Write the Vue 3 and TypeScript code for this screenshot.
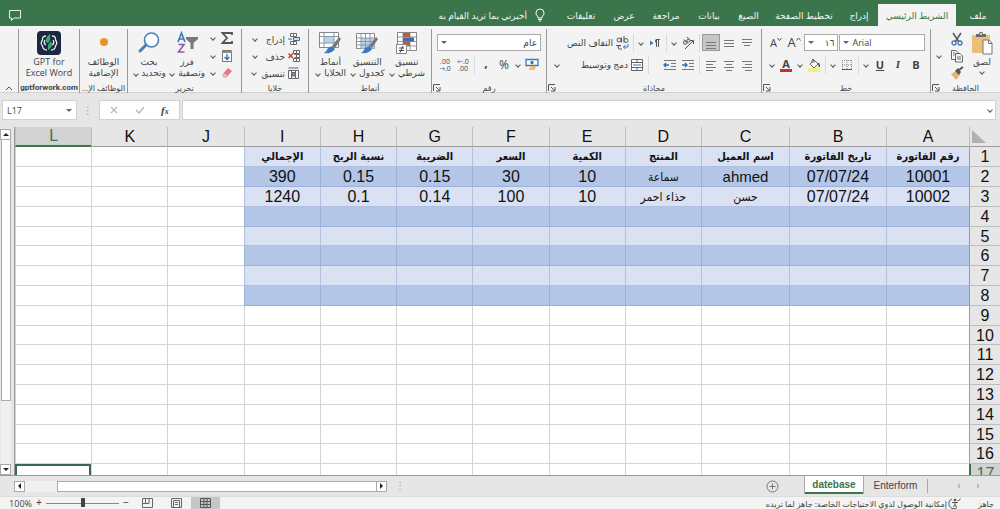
<script setup lang="ts">
import { ref } from 'vue'

const tabs = ['ملف', 'الشريط الرئيسي', 'إدراج', 'تخطيط الصفحة', 'الصيغ', 'بيانات', 'مراجعة', 'عرض', 'تعليقات']
const activeTab = ref('الشريط الرئيسي')

const columns = ['A', 'B', 'C', 'D', 'E', 'F', 'G', 'H', 'I', 'J', 'K', 'L']
const rowCount = 17
const tableColumns = 9
const tableRows = 8

const data: string[][] = [
  ['رقم الفاتورة', 'تاريخ الفاتورة', 'اسم العميل', 'المنتج', 'الكمية', 'السعر', 'الضريبة', 'نسبة الربح', 'الإجمالي'],
  ['10001', '07/07/24', 'ahmed', 'سماعة', '10', '30', '0.15', '0.15', '390'],
  ['10002', '07/07/24', 'حسن', 'حذاء احمر', '10', '100', '0.14', '0.1', '1240'],
]

const cellText = (row: number, col: number): string => data[row - 1]?.[col] ?? ''
const cellClass = (row: number, col: number) => ({
  band: row <= tableRows && col < tableColumns,
  dark: row <= tableRows && col < tableColumns && row % 2 === 0,
  head: row === 1,
  arabic: /[\u0600-\u06ff]/.test(cellText(row, col)),
  latin: /[a-z]/.test(cellText(row, col)),
  picked: row === 17 && col === 11,
})

const verticalAligns = [
  { name: 'محاذاة للأعلى', d: 'M3 4.5H13M3 7.5H13M5 10.5H11', on: false },
  { name: 'محاذاة للوسط', d: 'M3 5.5H13M3 8.5H13M3 11.5H13', on: false },
  { name: 'محاذاة للأسفل', d: 'M3 7.5H13M3 10.5H13M3 13.5H13', on: true },
]
const horizontalAligns = [
  { name: 'محاذاة لليمين', d: 'M3 4.5H13M6 7.5H13M3 10.5H13M6 13.5H13' },
  { name: 'توسيط', d: 'M3 4.5H13M5 7.5H11M3 10.5H13M5 13.5H11' },
  { name: 'محاذاة لليسار', d: 'M3 4.5H13M3 7.5H10M3 10.5H13M3 13.5H10' },
]

const fontName = ref('Arial')
const fontSize = ref('١٦')
const numberFormat = ref('عام')
const nameBox = ref('L17')
const formula = ref('')
const zoom = ref(50)
</script>

<template>
  <div class="app" dir="rtl">
    <nav class="tabs">
      <button v-for="t in tabs" :key="t" class="tab" :class="{ active: t === activeTab }" @click="activeTab = t">{{ t }}</button>
      <button class="tell">
        <svg width="12" height="14" viewBox="0 0 12 14" fill="none" stroke="#fff"><path d="M4 10V8.600C2.500 7.500 2 6.500 2 5a4 4 0 0 1 8 0c0 1.500-.5 2.500-2 3.600V10zM4 11.500H8M5 13H7" /></svg>
        <span>أخبرني بما تريد القيام به</span>
      </button>
      <button class="comment" aria-label="تعليقات">
        <svg width="14" height="13" viewBox="0 0 14 13" fill="none" stroke="#e6f2ea"><path d="M1.500 1.500H12.500V9H6L3.500 11.500V9H1.500Z" /></svg>
      </button>
    </nav>

    <div class="ribbon">
      <section class="group">
        <div class="body clip">
          <button class="big">
            <svg width="24" height="24" viewBox="0 0 24 24"><path d="M2 4H20V22H2Z" fill="#e9bf7a" /><path d="M6 6V3H9C9 0 13 0 13 3H16V6Z" fill="#6a6a6a" /><circle cx="11" cy="3" r="1" fill="#f3f3f3" /><path d="M13 9H19L22 12V23H13Z" fill="#fff" stroke="#777" /><path d="M18.500 9V12.500H22" fill="none" stroke="#777" /></svg>
            <span>لصق</span><i class="chev"></i>
          </button>
          <div class="stack icons">
            <button class="ib" aria-label="قص"><svg width="14" height="14" viewBox="0 0 14 14" fill="none"><path d="M3 1L9 10M11 1L5 10" stroke="#555" stroke-width="1.500" /><circle cx="4" cy="11" r="2" stroke="#3c78b4" stroke-width="1.300" /><circle cx="10" cy="11" r="2" stroke="#3c78b4" stroke-width="1.300" /></svg></button>
            <button class="ib" aria-label="نسخ"><svg width="14" height="14" viewBox="0 0 14 14" fill="#f7f7f7" stroke="#666"><path d="M1.500 1.500H6L8.500 4V10.500H1.500Z" /><path d="M5.500 4.500H10L12.500 7V13H5.500Z" /><path d="M7 8H11M7 10H11M3 4H5M3 6H4.500" /></svg></button>
            <button class="ib" aria-label="نسخ التنسيق"><svg width="14" height="14" viewBox="0 0 14 14"><path d="M1 8L6 5L10 9L6 14Z" fill="#e5b474" /><path d="M5 5L8 2L11 6L9 9Z" fill="#555" /><path d="M9 4L13 1" stroke="#555" stroke-width="2" /></svg></button>
          </div>
          <i class="chev"></i>
        </div>
        <footer>الحافظة<svg class="launch" width="8" height="8" viewBox="0 0 8 8"><path d="M.5 7V.5H7M3 3L6.500 6.500M7 3V7H3" /></svg></footer>
      </section>

      <section class="group">
        <div class="body rows">
          <div class="row">
            <label class="combo font"><select v-model="fontName" aria-label="الخط"><option>Arial</option></select><i class="tri"></i></label>
            <label class="combo size"><select v-model="fontSize" aria-label="حجم الخط"><option>١٦</option></select><i class="tri"></i></label>
            <button class="ib letter" aria-label="تكبير الخط">A<svg width="5" height="12" viewBox="0 0 5 12" fill="none" stroke="#555"><path d="M.5 3.500L2.500 1L4.500 3.500" /></svg></button>
            <button class="ib letter small" aria-label="تصغير الخط">A<svg width="5" height="12" viewBox="0 0 5 12" fill="none" stroke="#555"><path d="M.5 1L2.500 3.500L4.500 1" /></svg></button>
          </div>
          <div class="row">
            <button class="ib"><b>B</b></button>
            <button class="ib"><b class="it">I</b></button>
            <button class="ib"><b class="un">U</b></button><i class="chev"></i>
            <i class="sep"></i>
            <button class="ib" aria-label="حدود"><svg width="12" height="12" viewBox="0 0 12 12" fill="none" stroke="#888"><path d="M1 1.500H11M1.500 1V11M10.500 1V11M6 1V11M1 6H11" stroke-dasharray="1 1" /><path d="M1 10.500H11" stroke="#555" /></svg></button><i class="chev"></i>
            <i class="sep"></i>
            <button class="ib" aria-label="لون التعبئة"><svg width="14" height="14" viewBox="0 0 14 14"><path d="M1 10H13V14H1Z" fill="#f4f07a" /><path d="M3 6L7 2L11 6L7 10Z" fill="#fff" stroke="#666" /><path d="M5 5V2Q6 0 7 2V5" fill="none" stroke="#666" /><path d="M11 5Q13 7 12 9" stroke="#555" stroke-width="1.500" fill="none" /></svg></button><i class="chev"></i>
            <button class="ib fontcolor" aria-label="لون الخط"><b>A</b></button><i class="chev"></i>
          </div>
        </div>
        <footer>خط<svg class="launch" width="8" height="8" viewBox="0 0 8 8"><path d="M.5 7V.5H7M3 3L6.500 6.500M7 3V7H3" /></svg></footer>
      </section>

      <section class="group">
        <div class="body rows">
          <div class="row">
            <button v-for="a in verticalAligns" :key="a.name" class="ib" :class="{ on: a.on }" :aria-label="a.name"><svg width="16" height="16" viewBox="0 0 16 16" fill="none" stroke="#777"><path :d="a.d" /></svg></button>
            <i class="sep"></i>
            <button class="ib" aria-label="اتجاه"><svg width="14" height="14" viewBox="0 0 14 14" fill="none" stroke="#555"><path d="M4 13L12 5M12.500 8V4.500H9" /><circle cx="4" cy="6.500" r="1.700" /><path d="M3 3.500L7 7.500M6 1L10 5" /><circle cx="7.500" cy="4.500" r="1.500" /></svg></button><i class="chev"></i>
            <i class="sep"></i>
            <button class="ib" aria-label="اتجاه النص"><svg width="12" height="12" viewBox="0 0 12 12"><path d="M11 2.500H7.500V10M9.500 2.500V10" stroke="#555" fill="none" /><path d="M8 2A2 2 0 0 0 8 6Z" fill="#555" /><path d="M1 3.500L4.500 6L1 8.500Z" fill="#3c78b4" /></svg></button><i class="chev"></i>
            <i class="sep"></i>
            <button class="wide"><svg width="18" height="16" viewBox="0 0 18 16" fill="none" stroke="#555"><circle cx="6" cy="5" r="2" /><path d="M8.500 2.500V7.500M11 1V7.500M3 10.500H8Q4 11 5 13Q6 14.500 9 14" /><circle cx="13" cy="5.500" r="2" /><path d="M15 9V12H10.500M12.500 10L10.500 12L12.500 14" stroke="#3c78b4" /></svg><span>التفاف النص</span></button>
          </div>
          <div class="row">
            <button v-for="a in horizontalAligns" :key="a.name" class="ib" :aria-label="a.name"><svg width="16" height="16" viewBox="0 0 16 16" fill="none" stroke="#777"><path :d="a.d" /></svg></button>
            <i class="sep"></i>
            <button class="ib" aria-label="إنقاص المسافة البادئة"><svg width="14" height="12" viewBox="0 0 14 12" fill="none" stroke="#777"><path d="M1 1.500H13M8 4.500H13M8 7.500H13M1 10.500H13" /><path d="M1 6H6M4 4L6 6L4 8" stroke="#2a6db5" stroke-width="1.300" /></svg></button>
            <button class="ib" aria-label="زيادة المسافة البادئة"><svg width="14" height="12" viewBox="0 0 14 12" fill="none" stroke="#777"><path d="M1 1.500H13M8 4.500H13M8 7.500H13M1 10.500H13" /><path d="M1 6H6M3 4L1 6L3 8" stroke="#2a6db5" stroke-width="1.300" /></svg></button>
            <i class="spacer"></i>
            <i class="sep"></i>
            <button class="wide"><svg width="18" height="14" viewBox="0 0 18 14" fill="#fff" stroke="#666"><path d="M3.500 1.500H14.500V12.500H3.500ZM3.500 4.500H14.500M3.500 9.500H14.500M9 1.500V4.500M9 9.500V12.500" /><path d="M5 7H13" stroke="#3c78b4" /></svg><span>دمج وتوسيط</span></button>
            <i class="chev push"></i>
          </div>
        </div>
        <footer>محاذاة<svg class="launch" width="8" height="8" viewBox="0 0 8 8"><path d="M.5 7V.5H7M3 3L6.500 6.500M7 3V7H3" /></svg></footer>
      </section>

      <section class="group">
        <div class="body rows">
          <div class="row">
            <label class="combo number"><select v-model="numberFormat" aria-label="تنسيق الأرقام"><option>عام</option></select><i class="tri"></i></label>
          </div>
          <div class="row">
            <button class="ib" aria-label="عملة"><svg width="14" height="13" viewBox="0 0 14 13"><path d="M1 1.500H13V7.500H1Z" fill="#fff" stroke="#3c78b4" stroke-width="1.300" /><circle cx="7" cy="4.500" r="1.700" fill="#3c78b4" /><path d="M5 9H11M4 11H10" stroke="#e9bf7a" stroke-width="2" /></svg></button><i class="chev"></i>
            <button class="ib pct">%</button>
            <button class="ib comma">,</button>
            <i class="sep"></i>
            <button class="ib dec" aria-label="زيادة المنازل العشرية"><span><em>←</em>.0</span><span>.00</span></button>
            <button class="ib dec" aria-label="إنقاص المنازل العشرية"><span>.00</span><span><em>→</em>.0</span></button>
          </div>
        </div>
        <footer>رقم<svg class="launch" width="8" height="8" viewBox="0 0 8 8"><path d="M.5 7V.5H7M3 3L6.500 6.500M7 3V7H3" /></svg></footer>
      </section>

      <section class="group">
        <div class="body bigs">
          <button class="big">
            <svg width="24" height="24" viewBox="0 0 24 24"><path d="M2.500 1.500H21.500V19.500H2.500Z" fill="#fff" stroke="#888" /><path d="M8 2V19M15 2V19M3 6H21M3 10.500H21M3 15H21" stroke="#999" /><path d="M8 2H15V6H8ZM8 11H15V15H8Z" fill="#c8583c" /><path d="M8 6.500H19V10.500H8Z" fill="#3c6fb0" /><path d="M1.500 13.500H11.500V22.500H1.500Z" fill="#fff" stroke="#888" /><path d="M4 17H9M4 19.500H9M8 15L5 21.500" stroke="#444" /></svg>
            <span>تنسيق<br />شرطي <i class="chev"></i></span>
          </button>
          <button class="big">
            <svg width="24" height="24" viewBox="0 0 24 24"><path d="M1.500 2.500H19.500V17.500H1.500Z" fill="#fff" stroke="#888" /><path d="M6 7H19.500V17.500H6Z" fill="#b9d3ee" /><path d="M6 3V17M10.500 3V17M15 3V17M2 7H19M2 10.500H19M2 14H19" stroke="#8a9aaa" /><path d="M14 15L21 6L23 8L17 17Z" fill="#777" /><path d="M6 22Q9 20 10 17L14 15L17 18Q14 23 6 22Z" fill="#3c78c0" /></svg>
            <span>التنسيق<br />كجدول <i class="chev"></i></span>
          </button>
          <button class="big">
            <svg width="24" height="24" viewBox="0 0 24 24"><path d="M1.500 1.500H20.500V16.500H1.500Z" fill="#fff" stroke="#888" /><path d="M6 6H16V12H6Z" fill="#b9d3ee" /><path d="M6 2V16M16 2V16M2 5.500H20M2 12H20" stroke="#8a9aaa" /><path d="M14 15L21 6L23 8L17 17Z" fill="#777" /><path d="M6 22Q9 20 10 17L14 15L17 18Q14 23 6 22Z" fill="#3c78c0" /></svg>
            <span>أنماط<br />الخلايا <i class="chev"></i></span>
          </button>
        </div>
        <footer>أنماط</footer>
      </section>

      <section class="group">
        <div class="body stack cells">
          <button class="line"><svg width="12" height="12" viewBox="0 0 12 12" fill="#fff" stroke="#666"><path d="M2.500 .5H8.500V3.500H2.500ZM2.500 8.500H8.500V11.500H2.500ZM5.500 .5V3.500M5.500 8.500V11.500" /><path d="M5.500 4.500H11.500V7.500H5.500Z" fill="#c9dcf0" /><path d="M0 6H4" stroke="#2a6db5" /></svg><span>إدراج</span><i class="chev"></i></button>
          <button class="line"><svg width="12" height="12" viewBox="0 0 12 12" fill="#fff" stroke="#666"><path d="M5.500 .5H11.500V3.500H5.500ZM5.500 8.500H11.500V11.500H5.500ZM8.500 .5V11.500M6.500 4.500H11.500V7.500H6.500" /><path d="M.5 3.500L5 8M5 3.500L.5 8" stroke="#c0392b" stroke-width="1.300" /></svg><span>حذف</span><i class="chev"></i></button>
          <button class="line"><svg width="12" height="12" viewBox="0 0 12 12" fill="#fff" stroke="#666"><path d="M.5 3.500H10.500V11.500H.5ZM3.500 3.500V11.500M7.500 3.500V11.500M.5 1H10.500" /><path d="M3.500 5.500H7.500V9H3.500Z" fill="#5a8fc8" /></svg><span>تنسيق</span><i class="chev"></i></button>
        </div>
        <footer>خلايا</footer>
      </section>

      <section class="group">
        <div class="body edit">
          <div class="stack icons">
            <button class="line" aria-label="جمع تلقائي"><svg width="12" height="12" viewBox="0 0 12 12" fill="none" stroke="#555" stroke-width="1.800"><path d="M11 3V1H1.500L6 6L1.500 11H11V9" /></svg><i class="chev"></i></button>
            <button class="line" aria-label="تعبئة"><svg width="12" height="12" viewBox="0 0 12 12"><path d="M1.500 .5H10.500V11.500H1.500Z" fill="#fff" stroke="#777" /><path d="M1 1H11V3H1Z" fill="#888" /><path d="M6 4V9.500M3.500 7L6 9.500L8.500 7" fill="none" stroke="#2a6db5" stroke-width="1.300" /></svg><i class="chev"></i></button>
            <button class="line" aria-label="مسح"><svg width="12" height="12" viewBox="0 0 12 12"><path d="M1 8L7 1L11 4L5 11H3Z" fill="#e07a8b" /><path d="M1 8L3 6L7 9L5 11H3Z" fill="#f2b3bd" /></svg><i class="chev"></i></button>
          </div>
          <button class="big">
            <svg width="24" height="24" viewBox="0 0 24 24" fill="none"><path d="M3 11L6.500 2L10 11M4.500 8H8.500" stroke="#3c78b4" stroke-width="1.600" /><path d="M3.500 13.500H9L3.500 21H9.500" stroke="#8e5aa8" stroke-width="1.600" /><path d="M11 6H23V8L18.500 12V18H15.500V12L11 8Z" fill="#777" /></svg>
            <span>فرز<br />وتصفية <i class="chev"></i></span>
          </button>
          <button class="big">
            <svg width="24" height="24" viewBox="0 0 24 24" fill="none"><circle cx="14.500" cy="9" r="7" fill="#fff" stroke="#4a7fba" stroke-width="1.600" /><path d="M9 14L3 20" stroke="#4a7fba" stroke-width="3" stroke-linecap="round" /></svg>
            <span>بحث<br />وتحديد <i class="chev"></i></span>
          </button>
        </div>
        <footer>تحرير</footer>
      </section>

      <section class="group">
        <div class="body bigs">
          <button class="big">
            <svg width="24" height="24" viewBox="0 0 24 24"><circle cx="12" cy="11" r="4" fill="#e8952f" /></svg>
            <span>الوظائف<br />الإضافية</span>
          </button>
        </div>
        <footer>الوظائف الإ...</footer>
      </section>

      <section class="group">
        <div class="body bigs">
          <button class="big">
            <svg width="24" height="24" viewBox="0 0 24 24" fill="none"><rect x="0" y="0" width="24" height="24" rx="4" fill="#1c2740" /><path d="M9 5Q5 5 5.500 9Q3 12 5.500 15Q6 19 10 19M15 5Q19 5 18.500 9Q21 12 18.500 15Q18 19 14 19M8 9Q6 12 9 14M16 9Q18 12 15 14" stroke="#e4ece9" stroke-width="1.300" /><path d="M13 3Q8 6 9 11Q10 13 12 11Q14 8 13 3ZM14 10Q10 13 11 19Q15 17 15 13Z" fill="#35a873" /></svg>
            <span dir="ltr">GPT for<br />Excel Word</span>
          </button>
        </div>
        <footer class="strong">gptforwork.com</footer>
      </section>

      <button class="collapse" aria-label="طي الشريط"><svg width="8" height="5" viewBox="0 0 8 5" fill="none" stroke="#555"><path d="M1 4L4 1L7 4" /></svg></button>
    </div>

    <div class="formula" dir="ltr">
      <label class="name"><input v-model="nameBox" aria-label="مربع الاسم" /><i class="tri"></i></label>
      <span class="dots">⋮</span>
      <div class="fx">
        <button aria-label="إلغاء"><svg width="8" height="8" viewBox="0 0 8 8" stroke="#bbb" stroke-width="1.300"><path d="M1 1L7 7M7 1L1 7" /></svg></button>
        <button aria-label="إدخال"><svg width="10" height="8" viewBox="0 0 10 8" stroke="#bbb" stroke-width="1.500" fill="none"><path d="M1 4L4 7L9 1" /></svg></button>
        <button class="fn">f<sub>x</sub></button>
      </div>
      <label class="entry"><input v-model="formula" aria-label="شريط الصيغة" /><i class="chev"></i></label>
    </div>

    <main class="sheet">
      <div class="grid">
        <table>
          <colgroup><col class="c-row" /><col class="c-a" /><col class="c-b" /><col class="c-c" /><col v-for="n in 9" :key="n" /></colgroup>
          <thead>
            <tr>
              <th class="corner"><svg width="14" height="13" viewBox="0 0 14 13"><path d="M0 0V13H14Z" fill="#b1b1b1" /></svg></th>
              <th v-for="c in columns" :key="c" scope="col" :class="{ sel: c === 'L' }">{{ c }}</th>
            </tr>
          </thead>
          <tbody>
            <tr v-for="r in rowCount" :key="r">
              <th scope="row" :class="{ sel: r === 17 }">{{ r }}</th>
              <td v-for="(c, i) in columns" :key="c" :class="cellClass(r, i)">{{ cellText(r, i) }}</td>
            </tr>
          </tbody>
        </table>
      </div>
      <div class="vscroll">
        <button aria-label="لأعلى"><i class="up"></i></button>
        <div class="vthumb"></div>
        <div class="vrest"></div>
        <button aria-label="لأسفل"><i class="down"></i></button>
      </div>
    </main>

    <div class="sheets">
      <div class="arrows"><i class="ar"></i><i class="al"></i></div>
      <button class="stab">Enterform</button>
      <button class="stab current">datebase</button>
      <button class="add" aria-label="ورقة جديدة"><svg width="13" height="13" viewBox="0 0 13 13" fill="none" stroke="#777"><circle cx="6.500" cy="6.500" r="5.500" /><path d="M3.500 6.500H9.500M6.500 3.500V9.500" /></svg></button>
      <span class="dots grip">⋮</span>
      <div class="hscroll">
        <button aria-label="لليمين"><i class="right"></i></button>
        <div class="hthumb"></div>
        <div class="hrest"></div>
        <button aria-label="لليسار"><i class="left"></i></button>
      </div>
    </div>

    <footer class="status">
      <span class="ready">جاهز</span>
      <svg width="13" height="11" viewBox="0 0 13 11" fill="none" stroke="#555"><path d="M4 1A5 5 0 1 0 9 9.500" /><circle cx="7" cy="2" r="1" fill="#555" /><path d="M4 4.500H10M7 4.500V6.500L5.500 9M7 6.500L8.500 9M9.500 2L10.500 3L12.500 .5" /></svg>
      <span class="access">إمكانية الوصول لذوي الاحتياجات الخاصة: جاهز لما تريده</span>
      <div class="views">
        <button class="on" aria-label="عادي"><svg width="11" height="10" viewBox="0 0 11 10" fill="none" stroke="#555"><path d="M.5 .5H10.500V9.500H.5ZM4 .5V9.500M7 .5V9.500M.5 3.500H10.500M.5 6.500H10.500" /></svg></button>
        <button aria-label="تخطيط الصفحة"><svg width="11" height="10" viewBox="0 0 11 10" fill="none" stroke="#666"><path d="M.5 .5H10.500V9.500H.5ZM2.500 2.500H8.500V9.500M2.500 2.500V9.500M4 4.500H7M4 6.500H7" /></svg></button>
        <button aria-label="فواصل الصفحات"><svg width="11" height="10" viewBox="0 0 11 10" fill="none" stroke="#666"><path d="M.5 .5H10.500V9.500H.5ZM3.500 .5V5.500M7 .5V5.500H.5" /></svg></button>
      </div>
      <button class="pm" aria-label="تصغير">−</button>
      <input v-model="zoom" type="range" min="0" max="100" aria-label="تكبير/تصغير" />
      <button class="pm" aria-label="تكبير">+</button>
      <span class="pc" dir="ltr">100%</span>
    </footer>
  </div>
</template>

<style>
html, body { margin: 0; }
</style>

<style scoped>
.app { height: 100vh; display: flex; flex-direction: column; overflow: hidden; background: #e6e6e6; color: #444; font: 10px/11px "Open Sans", "DejaVu Sans", sans-serif; }
.app * { box-sizing: border-box; }
button { margin: 0; padding: 0; border: 0; background: none; font: inherit; color: inherit; white-space: nowrap; }
input, select { font: inherit; color: inherit; border: 0; padding: 0; margin: 0; background: transparent; outline: none; appearance: none; min-width: 0; }
svg { display: block; flex: none; }

.tabs { flex: none; height: 26px; background: #3b754b; color: #f0f7f2; display: grid; grid-template-columns: 44fr 78fr 38fr 72fr 39fr 40fr 46fr 38fr 48fr 127fr 400fr 30fr; align-items: end; font-size: 9px; }
.tab { height: 22px; padding-top: 1px; }
.tab.active { background: #f3f3f3; color: #3b754b; }
.tell { height: 22px; display: flex; align-items: center; gap: 7px; padding-inline-start: 11px; }
.comment { grid-column: 12; height: 22px; display: flex; align-items: center; padding-inline-start: 8px; }

.ribbon { flex: none; height: 67px; background: #f3f3f3; border-bottom: 1px solid #d2d2d2; padding: 3px 0 2px; display: grid; grid-template-columns: 70fr 169fr 215fr 115fr 123fr 67fr 114fr 48fr 61fr 18fr; font-size: 9px; }
.group { min-width: 0; border-inline-end: 1px solid #999; display: flex; flex-direction: column; }
.body { flex: 1; min-height: 0; display: flex; }
.group footer { height: 11px; position: relative; text-align: center; white-space: nowrap; font-size: 8px; }
.group footer.strong { font-family: Roboto, sans-serif; font-weight: 700; }
.launch { position: absolute; left: 1px; bottom: 1px; fill: none; stroke: #555; }
.rows { flex-direction: column; gap: 5px; padding: 5px 5px 0; }
.row { display: flex; align-items: center; height: 17px; }
.ib { width: 18px; height: 17px; flex: none; display: flex; align-items: center; justify-content: center; font-size: 11px; }
.ib.on { background: #c6c6c6; outline: 1px solid #999; outline-offset: -1px; }
.it { font-style: italic; font-family: "Liberation Serif", serif; }
.un { text-decoration: underline; }
.letter { font-size: 13px; direction: ltr; }
.letter.small { font-size: 11px; }
.fontcolor b { border-bottom: 3px solid #c9302c; width: 12px; line-height: 11px; }
.chev { width: 10px; height: 8px; flex: none; display: inline-flex; align-items: center; justify-content: center; }
.chev::before { content: ""; width: 3px; height: 3px; border: solid #555; border-width: 0 1px 1px 0; transform: rotate(45deg); }
.push { margin-inline-start: auto; }
.sep { width: 1px; margin: 0 2px; height: 18px; background: #dadada; flex: none; }
.spacer { width: 10px; flex: none; }
.wide { display: flex; align-items: center; }
.combo { height: 17px; border: 1px solid #ababab; background: #fff; display: flex; align-items: center; flex-direction: row-reverse; direction: ltr; padding: 0 3px; gap: 3px; min-width: 0; }
.combo select { flex: 1; width: 0; direction: rtl; }
.combo.font { flex: 0 1 87px; font-size: 9px; }
.combo.font select { direction: ltr; text-align: left; }
.combo.size { flex: 0 1 35px; margin-inline: 1px; }
.combo.number { flex: 1; }
.tri { border: 3px solid transparent; border-top-color: #666; border-bottom-width: 0; width: 0; height: 0; flex: none; }
.pct { font-size: 12px; }
.comma { font-size: 12px; font-weight: 700; padding-bottom: 4px; }
.dec { flex-direction: column; direction: ltr; font-size: 7px; line-height: 7px; }
.dec em { color: #2a6db5; font-style: normal; font-size: 7px; }

.big { display: flex; flex-direction: column; align-items: center; gap: 1px; padding-top: 2px; }
.big > span { line-height: 11px; text-align: center; }
.big .chev { width: 7px; }
.clip { padding: 0 6px 0 3px; gap: 2px; align-items: flex-start; justify-content: space-between; }
.clip > .chev { align-self: center; }
.stack { flex-direction: column; justify-content: space-between; padding: 1px 0; height: 100%; display: flex; }
.cells { padding: 2px 8px 1px 8px; }
.line { display: flex; align-items: center; gap: 3px; height: 16px; }
.line .chev { margin-inline-start: auto; }
.bigs { justify-content: space-around; padding: 0 4px; }
.edit { padding: 0 8px 0 4px; justify-content: space-between; }
.collapse { align-self: end; justify-self: center; padding-bottom: 2px; }

.formula { flex: none; display: flex; padding: 7px 4px 7px 2px; height: 34px; font-size: 10px; }
.name, .fx, .entry { background: #fff; border: 1px solid #d0d0d0; display: flex; align-items: center; }
.name { width: 75px; padding: 0 4px 0 4px; font-size: 9px; }
.name input { flex: 1; }
.dots { width: 22px; text-align: center; color: #999; align-self: center; }
.fx { width: 81px; justify-content: space-around; padding: 0 2px; }
.fn { font: italic bold 11px/12px "Liberation Serif", serif; }
.fn sub { font-size: 8px; line-height: 8px; vertical-align: baseline; }
.entry { flex: 1; margin-inline-start: 2px; }
.entry input { flex: 1; }

.sheet { flex: 1; min-height: 0; display: flex; border-bottom: 1px solid #9b9b9b; }
.grid { flex: 1; min-width: 0; overflow: hidden; background: #fff; }
table { width: 100%; table-layout: fixed; border-collapse: separate; border-spacing: 0; color: #111; font: 16px/18px "Liberation Sans", "DejaVu Sans", sans-serif; }
.c-row { width: 31px; }
.c-a { width: 83px; }
.c-b { width: 97px; }
.c-c { width: 88px; }
th, td { padding: 0; height: 20px; text-align: center; font-weight: 400; overflow: hidden; white-space: nowrap; border-left: 1px solid #d4d4d4; border-bottom: 1px solid #d4d4d4; }
tbody tr:nth-child(5n) > * { height: 19px; line-height: 17px; }
th { background: #e6e6e6; border-color: #bdbdbd; }
thead th { border-bottom-color: #9b9b9b; }
.corner svg { margin: 0 auto 0 2px; }
th.sel { background: #d2d2d2; color: #3b754b; }
thead th.sel { border-bottom: 2px solid #3b754b; }
tbody th { border-left-color: #9b9b9b; }
tbody th.sel { border-left: 2px solid #3b754b; }
td.band { background: #d9e1f2; border-color: #b0c0e0; }
td.band.dark { background: #b4c6e7; border-color: #9cb0d8; }
td.latin { font-size: 15px; }
td.arabic { font-family: "DejaVu Sans Condensed", "DejaVu Sans", sans-serif; font-size: 12px; }
td.head { font-size: 11px; font-weight: 700; }
td.picked { border: 2px solid #3b6650; border-bottom: 0; }

.vscroll { width: 15px; flex: none; border-right: 1px solid #9b9b9b; padding: 2px 3px 0 1px; display: flex; flex-direction: column; background: #e6e6e6; }
.vscroll button, .hscroll button { width: 11px; height: 11px; flex: none; background: #fff; border: 1px solid #aaa; display: flex; align-items: center; justify-content: center; }
.vthumb { flex: 262; background: #fff; border: 1px solid #ababab; border-top: 0; }
.vrest { flex: 64; background: #f0f0f0; }
.up, .down, .left, .right { width: 0; height: 0; border: 3px solid transparent; }
.up { border-bottom-color: #222; border-top: 0; }
.down { border-top-color: #222; border-bottom: 0; }
.right { border-left-color: #222; border-right: 0; }
.left { border-right-color: #222; border-left: 0; }

.sheets { flex: none; height: 20px; display: flex; align-items: stretch; font: 10px/16px "Liberation Sans", sans-serif; }
.arrows { width: 73px; display: flex; align-items: center; justify-content: center; gap: 17px; border-left: 1px solid #aaa; margin: 3px 0; padding-left: 8px; }
.ar, .al { width: 0; height: 0; border: 3px solid transparent; }
.ar { border-left-color: #bbb; border-right: 0; }
.al { border-right-color: #bbb; border-left: 0; }
.stab { min-width: 63px; }
.stab.current { min-width: 60px; background: #fff; color: #3b754b; font-weight: 700; border: solid #ababab; border-width: 0 1px; box-shadow: inset 0 -2px #3b754b; margin-bottom: 2px; }
.add { padding: 0 25px; display: flex; align-items: center; }
.grip { flex: 1; text-align: left; padding-left: 8px; }
.hscroll { flex: 0 1 373px; margin-left: 14px; display: flex; align-items: center; }
.hthumb { flex: 319; height: 11px; background: #fff; border: 1px solid #ababab; border-right: 0; }
.hrest { flex: 32; height: 11px; background: #f0f0f0; }

.status { flex: none; height: 13px; background: #f3f3f3; border-top: 1px solid #dcdcdc; display: flex; align-items: center; padding: 0 6px; font-size: 8px; white-space: nowrap; }
.ready { width: 33px; }
.access { margin-inline-start: 1px; }
.views { margin-inline-start: auto; display: flex; align-self: stretch; }
.views button { width: 29px; display: flex; align-items: center; justify-content: center; }
.views .on { background: #c6c6c6; }
.pm { width: 14px; font: 10px/12px "Liberation Sans", sans-serif; }
.status input { width: 73px; height: 12px; direction: rtl; }
.status input::-webkit-slider-runnable-track { height: 10px; background: linear-gradient(#888, #888) center / 100% 1px no-repeat; }
.status input::-webkit-slider-thumb { appearance: none; width: 4px; height: 9px; background: #444; }
.pc { font-size: 9px; width: 26px; text-align: right; }
</style>
